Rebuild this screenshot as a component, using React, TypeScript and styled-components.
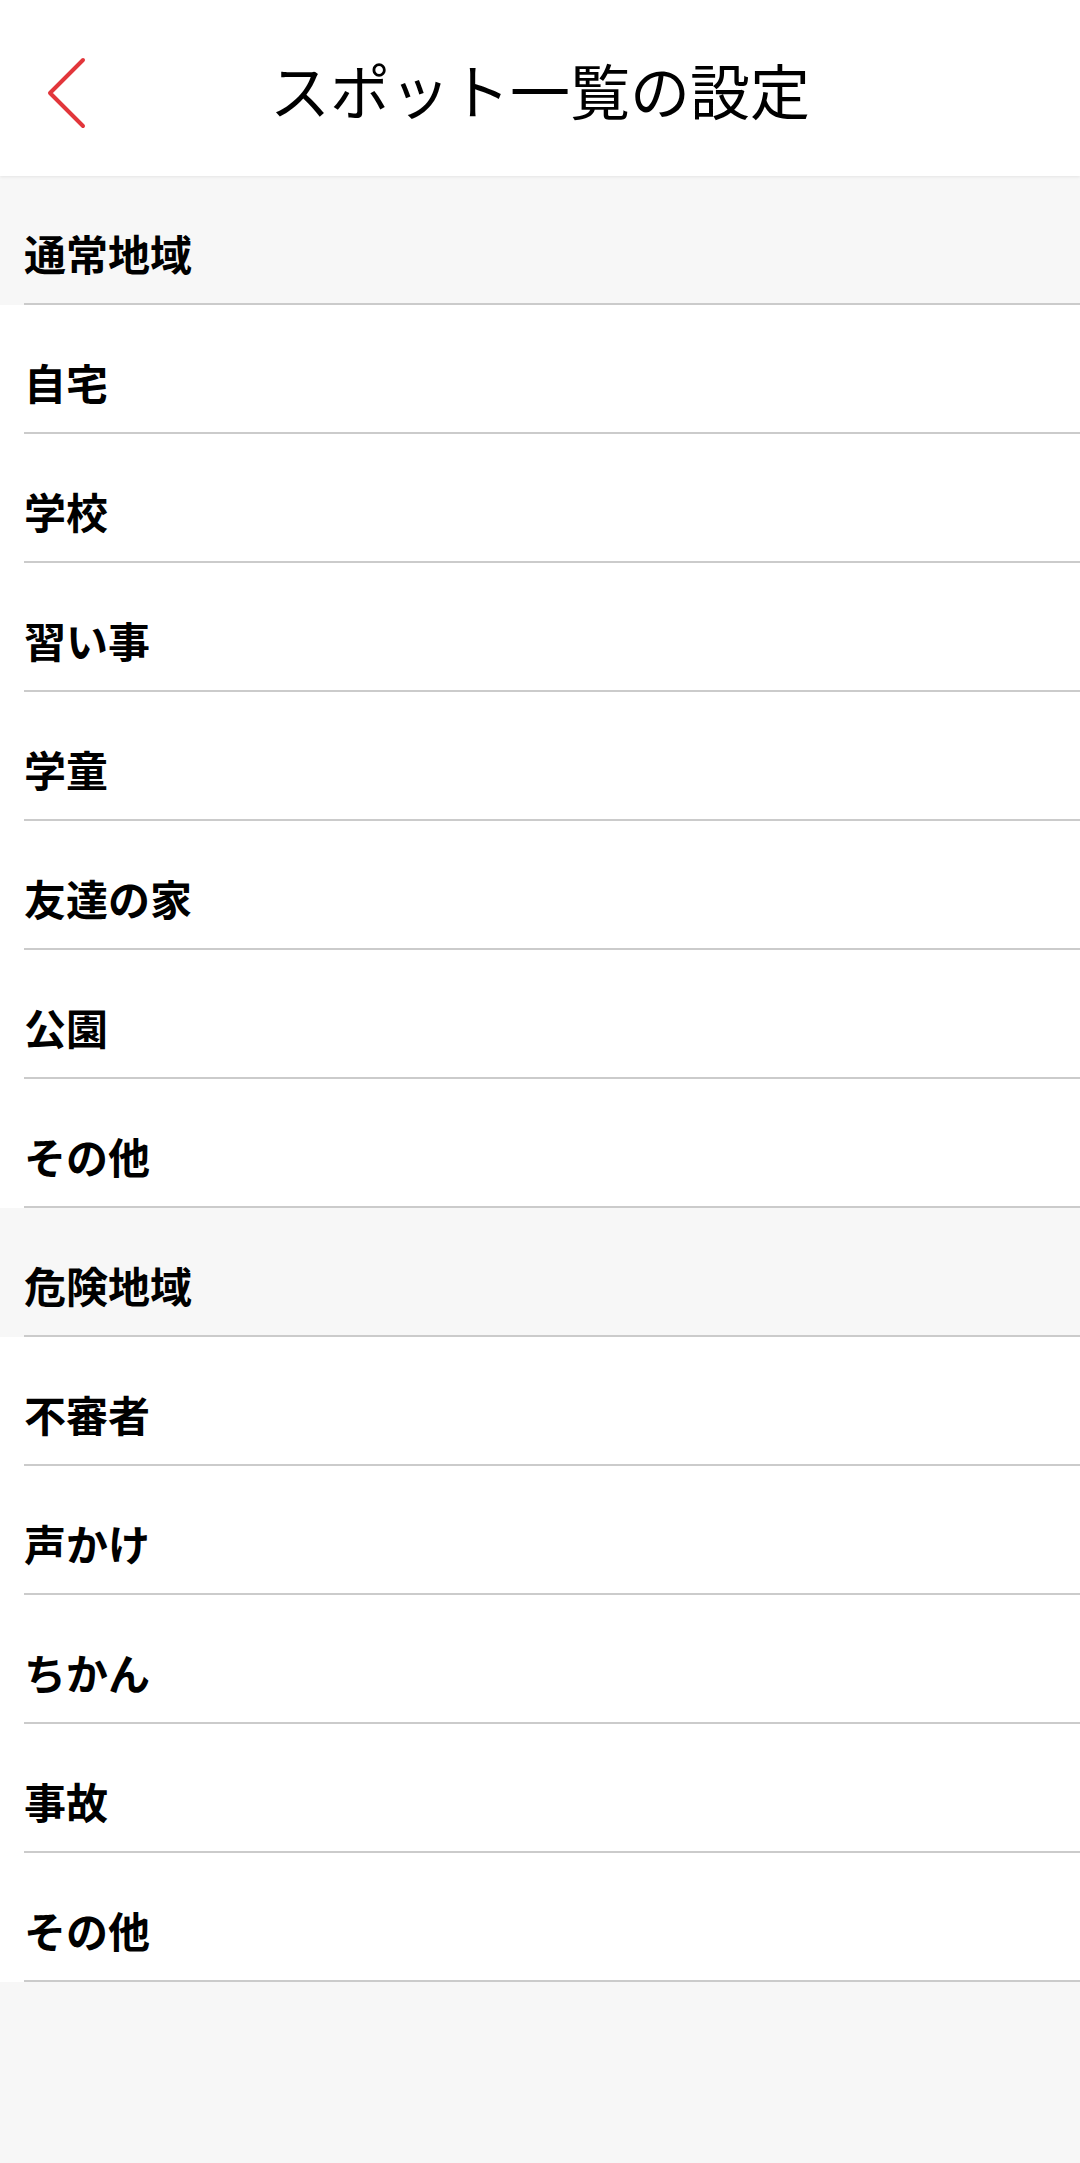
import styled, { createGlobalStyle } from 'styled-components';

interface SpotSection {
    id: string;
    title: string;
    items: string[];
}

const sections: SpotSection[] = [
    {
        id: 'normal',
        title: '通常地域',
        items: ['自宅', '学校', '習い事', '学童', '友達の家', '公園', 'その他'],
    },
    {
        id: 'danger',
        title: '危険地域',
        items: ['不審者', '声かけ', 'ちかん', '事故', 'その他'],
    },
];

const GlobalStyle = createGlobalStyle`
    html, body {
        margin: 0;
        padding: 0;
        background-color: #f7f7f7;
    }
    body {
        font-family: 'Noto Sans CJK JP', 'Noto Sans', sans-serif;
        color: #000;
    }
`;

function App() {
    return (
        <>
            <GlobalStyle />
            <Page>
                <Header>
                    <BackButton aria-label="戻る">
                        <svg width="40" height="72" viewBox="0 0 40 72">
                            <polyline
                                points="36,3 3,36 36,69"
                                fill="none"
                                stroke="#e2363b"
                                strokeWidth="4"
                                strokeLinecap="round"
                                strokeLinejoin="round"
                            />
                        </svg>
                    </BackButton>
                    <Title>スポット一覧の設定</Title>
                </Header>

                {sections.map((section) => (
                    <Section key={section.id}>
                        <SectionHeader>
                            <SectionLabel>{section.title}</SectionLabel>
                        </SectionHeader>
                        {section.items.map((item, i) => (
                            <Row key={`${section.id}-${i}`}>
                                <RowLabel>{item}</RowLabel>
                            </Row>
                        ))}
                    </Section>
                ))}
            </Page>
        </>
    );
}

// === styles ===

const Page = styled.div`
    width: 1080px;
    min-height: 2163px;
    background-color: #f7f7f7;
`;

const Header = styled.header`
    position: relative;
    z-index: 1;
    height: 176px;
    display: flex;
    align-items: center;
    justify-content: center;
    background-color: #fff;
    box-shadow: 0 1px 3px rgba(0, 0, 0, 0.08);
`;

// sits over the header bar, left of the centered title
const BackButton = styled.button`
    position: absolute;
    left: 47px;
    top: 57px;
    padding: 0;
    border: none;
    background: none;
    display: flex;
    cursor: pointer;
`;

const Title = styled.h1`
    margin: 0;
    padding-top: 2px;
    font-size: 60px;
    font-weight: 400;
    line-height: 1;
    letter-spacing: 0;
`;

const Section = styled.section`
    display: flex;
    flex-direction: column;
`;

// 行の共通部分: 下線は左 24px だけ内側から始まる
const BaseRow = styled.div`
    height: 129px;
    box-sizing: border-box;
    padding: 24px 0 0 24px;
    display: flex;
    align-items: center;
    position: relative;

    &::after {
        content: '';
        position: absolute;
        left: 24px;
        right: 0;
        bottom: 0;
        height: 2px;
        background-color: #cbcbcb;
    }
`;

const SectionHeader = styled(BaseRow)`
    background-color: #f7f7f7;
`;

const Row = styled(BaseRow)`
    background-color: #fff;
`;

const SectionLabel = styled.span`
    font-size: 42px;
    font-weight: 600;
    line-height: 1;
`;

const RowLabel = styled.span`
    font-size: 42px;
    font-weight: 600;
    line-height: 1;
`;

export default App;
